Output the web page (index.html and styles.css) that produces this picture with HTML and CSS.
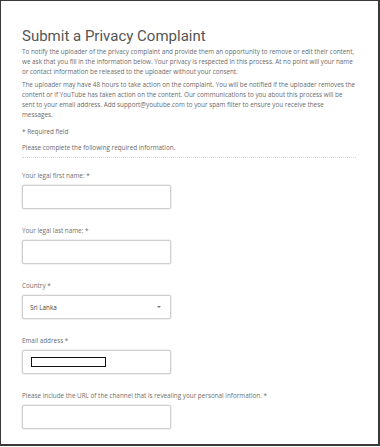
FILE: index.html
```html
<!DOCTYPE html>
<html lang="en">
<head>
<meta charset="utf-8">
<title>Submit a Privacy Complaint</title>
<link rel="stylesheet" href="styles.css">
</head>
<body>
<div class="frame">
  <div class="content">
    <h1 class="title">Submit a Privacy Complaint</h1>
    <p class="para">To notify the uploader of the privacy complaint and provide them an opportunity to remove or edit their content, we ask that you fill in the information below. Your privacy is respected in this process. At no point will your name or contact information be released to the uploader without your consent.</p>
    <p class="para">The uploader may have 48 hours to take action on the complaint. You will be notified if the uploader removes the content or if YouTube has taken action on the content. Our communications to you about this process will be<br>sent to your email address. Add support@youtube.com to your spam filter to ensure you receive these<br>messages.</p>
    <p class="note">* Required field</p>
    <p class="note intro">Please complete the following required information.</p>
    <div class="fields">
      <div class="field">
        <label class="label">Your legal first name: *</label>
        <div class="input"></div>
      </div>
      <div class="field">
        <label class="label">Your legal last name: *</label>
        <div class="input"></div>
      </div>
      <div class="field">
        <label class="label">Country *</label>
        <div class="input select"><span class="value">Sri Lanka</span><span class="arrow"></span></div>
      </div>
      <div class="field">
        <label class="label">Email address *</label>
        <div class="input email"><span class="redact"></span></div>
      </div>
      <div class="field">
        <label class="label">Please include the URL of the channel that is revealing your personal information. *</label>
        <div class="input"></div>
      </div>
    </div>
  </div>
</div>
</body>
</html>
```

FILE: styles.css
```css
html, body {
  margin: 0;
  padding: 0;
  background: #ffffff;
}
.frame {
  width: 380px;
  height: 446px;
  box-sizing: border-box;
  border: 1px solid #3a3a3a;
  border-right-width: 2px;
  border-bottom-width: 2px;
  overflow: hidden;
}
.content {
  padding: 26px 0 0 21px;
  font-family: "Open Sans", Roboto, "Liberation Sans", sans-serif;
  color: #6a6a6a;
}
.title {
  margin: 0 0 1px 0;
  font-family: Roboto, "Liberation Sans", sans-serif;
  font-size: 15px;
  line-height: 19px;
  font-weight: 400;
  color: #555555;
}
.para {
  width: 337px;
  margin: 0 0 3px 0;
  font-size: 6.33px;
  line-height: 10px;
}
.note {
  margin: 7px 0 0 0;
  font-size: 6.33px;
  line-height: 10px;
}
.intro {
  width: 334px;
  margin-top: 6px;
  padding-bottom: 4px;
  border-bottom: 1px dotted #d4d4d4;
}
.fields {
  display: flex;
  flex-direction: column;
  gap: 17px;
  margin-top: 13px;
}
.field {
  display: flex;
  flex-direction: column;
  gap: 4px;
}
.label {
  font-size: 6.33px;
  line-height: 10px;
  color: #6e6e6e;
}
.input {
  width: 149px;
  height: 24px;
  box-sizing: border-box;
  border: 1px solid #cfcfcf;
  border-radius: 2px;
  box-shadow: 0 0 0 0.5px #e2e2e2;
  background: #fff;
}
.select {
  display: flex;
  align-items: center;
  justify-content: space-between;
  padding: 0 9px 0 7px;
}
.value {
  font-size: 6.33px;
  color: #444;
}
.arrow {
  width: 0;
  height: 0;
  border-left: 2px solid transparent;
  border-right: 2px solid transparent;
  border-top: 2px solid #777;
}
.email {
  display: flex;
  align-items: center;
  padding-left: 8px;
}
.redact {
  width: 75px;
  height: 10px;
  box-sizing: border-box;
  border: 1.5px solid #111;
  background: #fff;
}
```
